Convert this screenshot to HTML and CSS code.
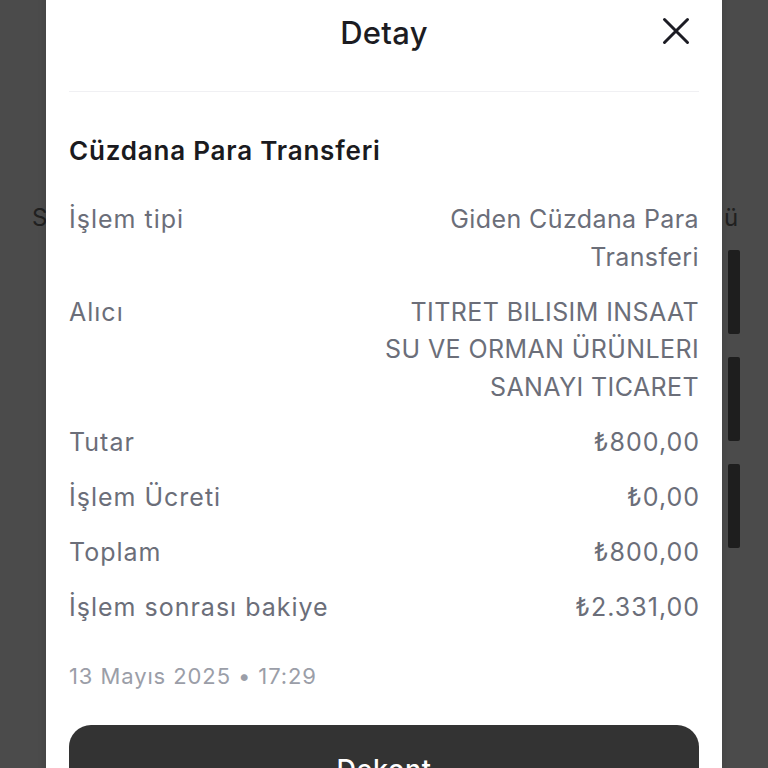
FILE: index.html
```html
<!DOCTYPE html>
<html lang="tr">
<head>
<meta charset="utf-8">
<title>Detay</title>
<link rel="stylesheet" href="styles.css">
</head>
<body>
<div class="page">
  <div class="page-side page-left">S</div>
  <div class="page-side page-right">
    <span class="page-letter">ü</span>
    <div class="page-bar"></div>
    <div class="page-bar"></div>
    <div class="page-bar"></div>
  </div>
</div>

<div class="sheet">
  <header class="sheet-head">
    <h1 class="sheet-title">Detay</h1>
    <button class="close" aria-label="Kapat">
      <svg width="30" height="30" viewBox="0 0 30 30"><path d="M3.5 3.5 L26.5 26.5 M26.5 3.5 L3.5 26.5" stroke="#1c1c24" stroke-width="3" stroke-linecap="round" fill="none"/></svg>
    </button>
  </header>
  <div class="divider"></div>

  <h2 class="tx-title">Cüzdana Para Transferi</h2>

  <div class="rows">
    <div class="row"><span class="label">İşlem tipi</span><span class="value">Giden Cüzdana Para Transferi</span></div>
    <div class="row"><span class="label">Alıcı</span><span class="value">TITRET BILISIM INSAAT SU VE ORMAN ÜRÜNLERI SANAYI TICARET</span></div>
    <div class="row"><span class="label">Tutar</span><span class="value amount">₺800,00</span></div>
    <div class="row"><span class="label">İşlem Ücreti</span><span class="value amount">₺0,00</span></div>
    <div class="row"><span class="label">Toplam</span><span class="value amount">₺800,00</span></div>
    <div class="row"><span class="label">İşlem sonrası bakiye</span><span class="value amount">₺2.331,00</span></div>
  </div>

  <div class="date">13 Mayıs 2025 • 17:29</div>

  <button class="primary">Dekont</button>
</div>
</body>
</html>
```

FILE: styles.css
```css
* { box-sizing: border-box; }
html, body { margin: 0; padding: 0; }
body {
  width: 768px;
  height: 768px;
  overflow: hidden;
  background: #4b4b4b;
  font-family: Inter, "Noto Sans", "Liberation Sans", sans-serif;
  position: relative;
}

.page {
  display: flex;
  justify-content: space-between;
  height: 768px;
  padding: 0 28px 0 32px;
}
.page-side { padding-top: 200px; color: #202020; font-size: 24px; line-height: 36px; }
.page-right { display: flex; flex-direction: column; align-items: flex-start; gap: 0; }
.page-letter { display: block; margin-left: -4px; }
.page-bar {
  width: 12px;
  height: 84px;
  background: #1e1e1e;
  border-radius: 2px;
  margin-top: 14px;
}
.page-bar + .page-bar { margin-top: 23px; }

.sheet {
  position: absolute;
  left: 46px;
  top: -30px;
  width: 676px;
  height: 900px;
  background: #ffffff;
  border-radius: 24px;
  padding: 30px 23px 0;
  box-shadow: 0 0 8px rgba(0,0,0,0.15);
}

.sheet-head {
  position: relative;
  height: 64px;
  display: flex;
  align-items: center;
  justify-content: center;
}
.sheet-title {
  margin: 0;
  font-size: 31px;
  font-weight: 500;
  color: #1c1c22;
  letter-spacing: 0.3px;
}
.close {
  position: absolute;
  right: 8px;
  top: 16px;
  width: 30px;
  height: 30px;
  padding: 0;
  border: 0;
  background: none;
  display: flex;
}

.divider {
  margin-top: 27px;
  height: 1px;
  background: #f0f0f3;
}

.tx-title {
  margin: 43px 0 0;
  font-size: 26px;
  line-height: 32px;
  font-weight: 600;
  color: #1a1a20;
  letter-spacing: 0.8px;
}

.rows {
  margin-top: 34px;
  display: flex;
  flex-direction: column;
  gap: 17.5px;
}
.row {
  display: flex;
  justify-content: space-between;
  align-items: flex-start;
  font-size: 25px;
  line-height: 37.6px;
  color: #6b6e79;
  letter-spacing: 1px;
}
.label { flex: none; }
.value {
  max-width: 322px;
  text-align: right;
  letter-spacing: 0.4px;
}
.value.amount {
  letter-spacing: 1px;
  margin-right: -1px;
}

.date {
  margin-top: 34px;
  font-size: 22px;
  line-height: 30px;
  color: #9b9ea8;
  letter-spacing: 0.9px;
}

.primary {
  margin-top: 34px;
  width: 100%;
  height: 90px;
  border: 0;
  border-radius: 22px;
  background: #333333;
  color: #ffffff;
  font-family: inherit;
  font-size: 27px;
  font-weight: 500;
  letter-spacing: 0.6px;
  display: flex;
  align-items: center;
  justify-content: center;
  padding: 0;
}
```
